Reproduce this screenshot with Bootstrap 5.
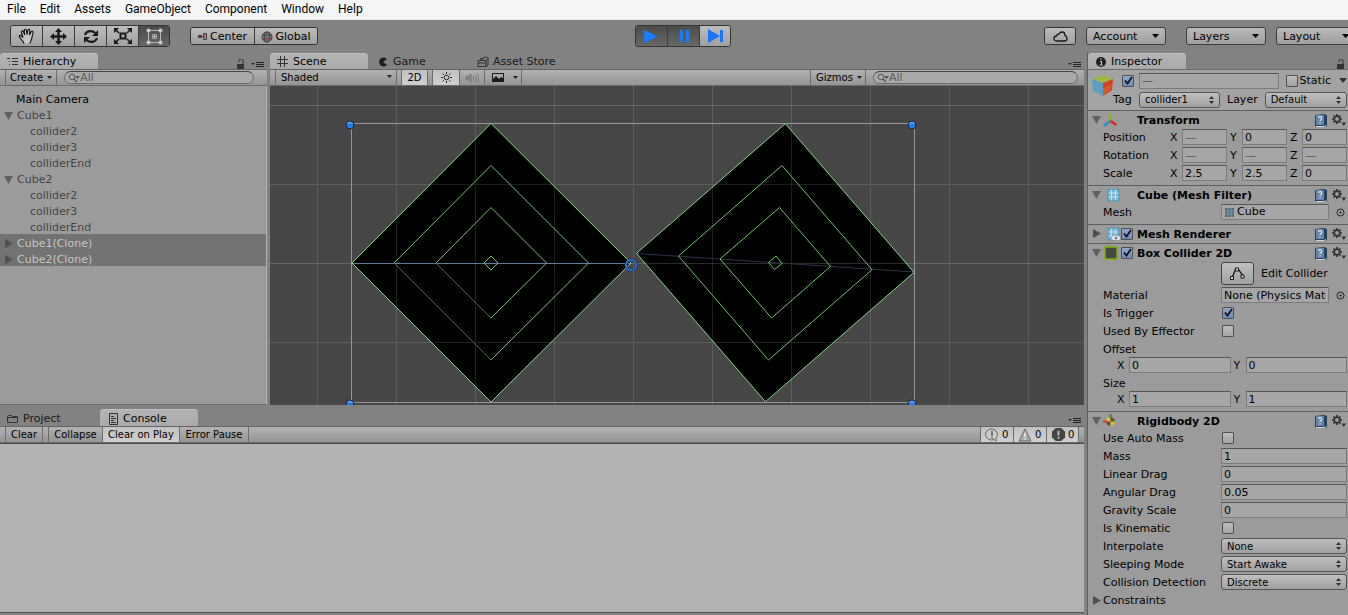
<!DOCTYPE html>
<html lang="en">
<head>
<meta charset="utf-8">
<meta name="viewport" content="width=device-width, initial-scale=1">
<title>Scene editor</title>
<link href="https://cdn.jsdelivr.net/npm/bootstrap@5.3.0/dist/css/bootstrap.min.css" rel="stylesheet">
<style>
  body { font-family: "DejaVu Sans", Verdana, sans-serif; font-size: 11px; line-height: 16px; color: #000; background: #828282; }
  svg { display: block; flex: none; }
  button, select, input { font-family: inherit; color: inherit; border-radius: 0; margin: 0; }
  label { cursor: default; }
  .shrinkable { min-width: 0; min-height: 0; }

  .menubar { height: 20px; background: #f4f6f8; border-bottom: 1px solid #e6e9ea; font: 12px/19px Roboto, "Segoe UI", sans-serif; }
  .menubar a { color: #000; text-decoration: none; padding: 0 7px; }

  .main-tools { height: 32px; margin-right: -14px; padding: 0 6px 0 10px; }
  .side { flex: 1 1 0; }
  .side .tool-group + .tool-group { margin-left: 20px; }
  .side .pick { margin-left: 10px; }
  .side .pick + .pick:not(:last-child) { margin-left: 20px; }
  .tool-group { border: 1px solid #333; border-radius: 3px; overflow: hidden; }
  .tool { display: flex; align-items: center; justify-content: center; gap: 2px; padding: 0; border: 0; border-left: 1px solid #3c3c3c; background: linear-gradient(#bcbcbc, #a0a0a0); }
  .tool:first-child { border-left: 0; }
  .tool.on { background: linear-gradient(#4b4b4b, #676767); }
  .tool-tall { width: 32px; height: 20px; }
  .tool-tall:first-child, .tool-tall:last-child { width: 31px; }
  .tool-short { width: 63px; height: 16px; padding-top: 1px; }
  .tool-cloud { width: 30px; height: 16px; }
  .pick { appearance: none; height: 18px; width: 80px; line-height: 15px; padding: 0 6px; border: 1px solid #3c3c3c; border-radius: 3px;
    background: url("data:image/svg+xml,%3Csvg xmlns='http://www.w3.org/2000/svg' width='7' height='4'%3E%3Cpath d='M0 0h7L3.500 4z'/%3E%3C/svg%3E") no-repeat right 6px center, linear-gradient(#b8b8b8, #a0a0a0); }

  .tabs { height: 17px; padding-top: 1px; }
  .tabs .extras { margin-left: auto; display: flex; align-items: center; padding: 6px 3px 0 0; gap: 6px; }
  .tab { width: 98px; margin-right: 2px; padding: 2px 0 0 7px; gap: 4px; border: 0; background: none; text-align: left; display: flex; align-items: center; white-space: nowrap; color: #1a1a1a; }
  .tab.on { background: linear-gradient(#b4b4b4, #aaa); border-top: 1px solid #c0c0c0; border-radius: 4px 4px 0 0; color: #000; padding-top: 1px; }
  .strip { height: 17px; padding-left: 5px; border-top: 1px solid #636363; border-bottom: 1px solid #6a6a6a; background: linear-gradient(#b2b2b2, #949494); font-size: 10px; }
  .strip button, .strip select { border: 0; border-left: 1px solid #6c6c6c; background: none; font-size: 10px; line-height: 14px; padding: 0 4px; white-space: nowrap; }
  .strip .lit { background: linear-gradient(#c2c2c2, #cfcfcf); }
  .strip .edge { border-right: 1px solid #6c6c6c; }
  .strip .drop { display: flex; align-items: center; gap: 4px; }
  .search { height: 13px; margin: 1px 13px 0 7px; border: 1px solid #6a6a6a; border-top-color: #444; border-radius: 7px; background: #a9a9a9; padding-left: 3px; }
  .search input { border: 0; background: none; outline: 0; padding: 0; font-size: 11px; line-height: 11px; min-width: 0; }
  .search input::placeholder { color: #5a5a5a; opacity: 1; }

  .hier { flex: 0 0 267px; margin-right: 3px; }
  .hier .pane { background: #9b9b9b; border-right: 1px solid #b2b2b2; border-bottom: 1px solid #6a6a6a; padding-top: 4px; }
  .node { display: flex; align-items: center; height: 16px; padding: 3px 0 0 4px; gap: 4px; color: #444; }
  .node.camera { color: #000; padding-left: 16px; }
  .node.child { padding-left: 30px; }
  .node.picked { background: #727272; color: #c8c8c8; }
  .scene .pane { background: #474747; }
  .scene .pane svg { position: absolute; inset: 0; width: 100%; height: 100%; }
  .scene .strip .shading { appearance: none; width: 122px; padding-left: 5px;
    background: url("data:image/svg+xml,%3Csvg xmlns='http://www.w3.org/2000/svg' width='5' height='3'%3E%3Cpath d='M0 0h5L2.500 3z' fill='%23222'/%3E%3C/svg%3E") no-repeat right 4px top 5px; }
  .scene .strip .toggle { width: 27px; margin-left: 4px; }
  .scene .strip .audio { width: 25px; }
  .scene .strip .effects { width: 38px; padding-left: 7px; gap: 9px; }
  .scene .strip .gizmos { width: 56px; padding-left: 5px; }
  .scene .search { width: 205px; margin-right: 6px; }

  .console { flex: 0 0 210px; padding: 4px 0 2px; }
  .console .tabs { padding-top: 0; }
  .console .pane { background: #b2b2b2; border-top: 1px solid #4a4a4a; border-bottom: 1px solid #555; }
  .console .strip { flex: none; }
  .console .strip .clear { width: 38px; margin-right: 5px; }
  .console .strip .collapse-all { width: 54px; }
  .console .strip .on-play { width: 77px; }
  .console .strip .on-error { width: 70px; }
  .console .strip .counter { display: flex; align-items: center; width: 33px; padding: 0 2px 0 4px; gap: 2px; }
  .console .strip .counter:last-child { margin-right: 5px; }

  .inspector { flex: 0 0 261px; margin-left: 3px; border-left: 1px solid #5c5c5c; }
  .inspector .tabs { flex: none; }
  .inspector .pane { background: #9b9b9b; border-top: 1px solid #6a6a6a; }
  .obj { height: 40px; padding-top: 1px; background: #a3a3a3; }
  .obj-icon { margin: 1px 6px 0 2px; }
  .obj-row { display: flex; align-items: center; height: 19px; padding-right: 1px; }
  .obj-row .obj-name { flex: 1 1 0; margin: 0 7px 0 5px; }
  .obj-row .static { margin: 0 8px 0 2px; }
  .obj-row .tag { width: 26px; margin-left: -9px; flex: none; }
  .obj-row .layer { margin: 0 7px; }
  .comp { border-top: 1px solid #5e5e5e; padding-bottom: 3px; }
  .comp.folded { padding-bottom: 1px; }
  .comp-title { display: flex; align-items: center; height: 17px; padding: 1px 2px 0 4px; font-weight: bold; }
  .comp-title .title-text { padding-top: 2px; }
  .comp-title .help { margin: 0 5px 0 auto; }
  .slot { width: 11px; }
  .icon-slot, .tick-slot { width: 17px; }
  .prop { height: 18px; padding: 0 1px 0 15px; display: flex; align-items: center; white-space: nowrap; }
  .prop.head { height: 16px; padding-top: 3px; }
  .prop.tall { height: 25px; }
  .prop.pair { padding-left: 29px; }
  .prop.fold { padding: 1px 0 0 4px; }
  .prop > .cap { width: 118px; flex: none; padding-top: 2px; }
  .prop > .cap-xyz { width: 67px; flex: none; padding-top: 2px; }
  .prop > .tick, .tick-slot .tick { margin-left: 1px; }
  .prop > .picker { margin: 0 2px 0 auto; }
  .axis { display: flex; align-items: center; flex: 1 1 0; }
  .axis label { width: 12px; flex: none; padding-top: 2px; }
  .axis + .axis { padding-left: 3px; }
  .fld { height: 16px; min-width: 0; width: 100%; border: 1px solid #7b7b7b; border-top-color: #555; background: #a6a6a6; padding: 0 2px; font-size: 11px; line-height: 14px; }
  .fld.mixed { color: #555; }
  .fld input { border: 0; background: none; padding: 0 2px; min-width: 0; }
  .objfld { flex: 0 0 108px; }
  .sel { appearance: none; height: 16px; min-width: 0; width: 100%; border: 1px solid #565656; border-radius: 3px; font-size: 10px; line-height: 13px; padding: 0 5px;
    background: url("data:image/svg+xml,%3Csvg xmlns='http://www.w3.org/2000/svg' width='5' height='8'%3E%3Cpath d='M0 3L2.500 0 5 3zM0 5h5L2.500 8z' fill='%23303030'/%3E%3C/svg%3E") no-repeat right 5px center, linear-gradient(#bebebe, #a0a0a0); }
  .sel.tag-list { width: 81px; flex: none; }
  .tick { appearance: none; display: block; width: 12px; height: 12px; flex: none; border: 1px solid #505050; border-radius: 1px; background: linear-gradient(#bdbdbd, #a3a3a3); }
  .tick:checked { background: url("data:image/svg+xml,%3Csvg xmlns='http://www.w3.org/2000/svg' viewBox='0 0 10 10'%3E%3Cpath d='M2 4.500L4.500 7.500 9 1' fill='none' stroke='%23101020' stroke-width='1.800'/%3E%3C/svg%3E"), linear-gradient(#8fa6cc, #6f8cba); }
  .edit { width: 33px; height: 23px; border: 1px solid #444; border-radius: 3px; background: linear-gradient(#c0c0c0, #a0a0a0); padding: 0; }
  .edit + label { margin-left: 7px; }
</style>
</head>
<body class="vh-100 d-flex flex-column overflow-hidden">

<svg width="0" height="0" class="position-absolute" aria-hidden="true">
  <symbol id="lock" viewBox="0 0 8 10"><path d="M0 5h7v5H0z" fill="#333"/><path d="M2 3V2a1.500 1.500 0 0 1 4 0v3" fill="none" stroke="#444" stroke-width="1.300"/></symbol>
  <symbol id="opts" viewBox="0 0 13 7"><path d="M0 2h4L2 4z M5 1h8v1H5z M5 3h8v1H5z M5 5h8v1H5z" fill="#222"/></symbol>
  <symbol id="lens" viewBox="0 0 12 10"><circle cx="4" cy="4" r="2.800" fill="none" stroke="#555"/><path d="M6 6l3 3" stroke="#555" stroke-width="1.500"/><path d="M7 3h5L9.500 6z" fill="#555"/></symbol>
  <symbol id="down" viewBox="0 0 5 3"><path d="M0 0h5L2.500 3z" fill="#222"/></symbol>
  <symbol id="open" viewBox="0 0 9 8"><path d="M0 0h9L4.500 8z" fill="#606060"/></symbol>
  <symbol id="shut" viewBox="0 0 9 10"><path d="M1 0v9l8-4.500z" fill="#505050"/></symbol>
  <symbol id="book" viewBox="0 0 13 13"><path d="M1 1l9-1 3 1v11l-2 1H2l-1-1z" fill="#28405f"/><path d="M2 1h8v10H2z" fill="#6685aa"/><path d="M2 12h8l2-1v1l-2 1H2z" fill="#d0d6dc"/><path d="M4.500 4a1.600 1.600 0 1 1 2.500 1.500Q6 6 6 7M6 8.300v1.200" fill="none" stroke="#e6edf5" stroke-width="1.100"/></symbol>
  <symbol id="gear" viewBox="0 0 14 12"><circle cx="5" cy="5" r="2.800" fill="none" stroke="#303030" stroke-width="1.600"/><path d="M5 0v2M5 8v2M0 5h2M8 5h2M1.500 1.500l1.300 1.300M7.200 7.200l1.300 1.300M8.500 1.500L7.200 2.800M2.800 7.200L1.500 8.500" stroke="#303030" stroke-width="1.700"/><path d="M9.500 8.500H14L11.800 12z" fill="#303030"/></symbol>
  <symbol id="mesh" viewBox="0 0 13 14"><path d="M1 1.500Q6.500.500 12 1.500v11q-5.500 1-11 0z" fill="#79b4d0" stroke="#4a93b5"/><path d="M4.500 1.500v11M8.500 1.500v11M1.500 5h10M1.500 9h10" stroke="#c4e4f2"/></symbol>
  <symbol id="target" viewBox="0 0 9 9"><circle cx="4.500" cy="4.500" r="3.500" fill="none" stroke="#222"/><circle cx="4.500" cy="4.500" r="1" fill="#111"/></symbol>
</svg>

<nav class="menubar d-flex flex-shrink-0" aria-label="Application">
  <a href="#">File</a><a href="#">Edit</a><a href="#">Assets</a><a href="#">GameObject</a><a href="#">Component</a><a href="#">Window</a><a href="#">Help</a>
</nav>

<header class="main-tools d-flex align-items-center flex-shrink-0">
  <div class="side d-flex align-items-center">
    <div class="tool-group d-flex">
      <button class="tool tool-tall" aria-label="Hand"><svg width="18" height="17" viewBox="0 0 18 17"><path d="M6 15.500c-.5-2-2-3-3.500-5C1 8.700 1 7.500 2 7.400c1.300 0 2 1.300 3 2.300L3.500 4.500c-.4-1.600 1.300-2.200 1.900-.7L6.700 7 6.300 2.500c0-1.700 1.900-1.700 2.200 0L9 6.600l.8-4.300c.3-1.600 2.100-1.300 2 .3L11.500 7l1.600-3c.8-1.400 2.400-.6 1.900.9-.8 2.600-.9 4.500-1.500 6.600-.4 1.500-1.500 2.300-1.500 4" fill="#c4c4c4" stroke="#111" stroke-width="1.100"/></svg></button>
      <button class="tool tool-tall" aria-label="Move"><svg width="17" height="17" viewBox="0 0 17 17"><path d="M8.500 0l3.500 4h-2.300v3.300H13V5l4 3.500-4 3.500V9.700H9.700V13H12l-3.500 4L5 13h2.300V9.700H4V12L0 8.500 4 5v2.300h3.300V4H5z" fill="#181818"/></svg></button>
      <button class="tool tool-tall" aria-label="Rotate"><svg width="16" height="15" viewBox="0 0 16 15"><path d="M2 6c1.500-4.500 7-5 10.500-2M14 9c-1.500 4.500-7 5-10.500 2" fill="none" stroke="#1c1c1c" stroke-width="2.200"/><path d="M15 1v6H9zM1 14V8h6z" fill="#1c1c1c"/></svg></button>
      <button class="tool tool-tall" aria-label="Scale"><svg width="18" height="16" viewBox="0 0 18 16"><path d="M6.500 5.500h5v5h-5z" fill="none" stroke="#181818" stroke-width="2"/><path d="M1 1l4 4M17 1l-4 4M1 15l4-4M17 15l-4-4" stroke="#181818" stroke-width="1.600"/><path d="M0 0h5L0 5zM18 0v5l-5-5zM0 16v-5l5 5zM18 16h-5l5-5z" fill="#181818"/></svg></button>
      <button class="tool tool-tall on" aria-label="Rect" aria-pressed="true"><svg width="17" height="17" viewBox="0 0 17 17"><path d="M2.500 2.500h12v12h-12z" fill="none" stroke="#b8b8b8"/><path d="M6.500 6.500h4v4h-4z" fill="none" stroke="#a0a0a0"/><circle cx="8.500" cy="8.500" r="1.200" fill="#ccc"/><g fill="#cacaca"><circle cx="2.500" cy="2.500" r="2"/><circle cx="14.500" cy="2.500" r="2"/><circle cx="2.500" cy="14.500" r="2"/><circle cx="14.500" cy="14.500" r="2"/></g></svg></button>
    </div>
    <div class="tool-group d-flex">
      <button class="tool tool-short"><svg width="10" height="9" viewBox="0 0 10 9"><path d="M0 3h4v3H0z" fill="#444"/><path d="M5.500 1.500h3v6h-3z" fill="#888" stroke="#444"/><path d="M3 4h4v1H3z" fill="#b33"/></svg>Center</button>
      <button class="tool tool-short"><svg width="12" height="12" viewBox="0 0 12 12"><circle cx="6" cy="6" r="5" fill="#777" stroke="#444"/><ellipse cx="6" cy="6" rx="2.500" ry="5" fill="none" stroke="#444"/><path d="M1.500 4h9M1.500 8h9" stroke="#444"/><path d="M4.500 2v6.500H9" fill="none" stroke="#b44"/></svg>Global</button>
    </div>
  </div>
  <div class="tool-group d-flex">
    <button class="tool tool-tall on" aria-label="Play"><svg width="17" height="15" viewBox="0 0 17 15"><path d="M1 1l14 6.500L1 14z" fill="#1b7dff" stroke="#2a6fc0" stroke-opacity=".5"/></svg></button>
    <button class="tool tool-tall on" aria-label="Pause"><svg width="12" height="14" viewBox="0 0 12 14"><path d="M2 1h3v12H2zM8 1h3v12H8z" fill="#1b7dff" stroke="#2a6fc0" stroke-opacity=".5"/></svg></button>
    <button class="tool tool-tall" aria-label="Step"><svg width="17" height="14" viewBox="0 0 17 14"><path d="M1 0l12 7L1 14zM13 1h3v12h-3z" fill="#1874fa"/></svg></button>
  </div>
  <div class="side d-flex align-items-center justify-content-end">
    <div class="tool-group"><button class="tool tool-cloud" aria-label="Cloud"><svg width="15" height="11" viewBox="0 0 15 11"><path d="M4 10Q1 10 1 7.500 1 5 3.500 5 4 3 6 3 7 1 9 1q3 0 3 3.500 2 .5 2 3T11.500 10z" fill="none" stroke="#181818" stroke-width="1.300"/></svg></button></div>
    <select class="pick" aria-label="Account"><option>Account</option></select>
    <select class="pick" aria-label="Layers"><option>Layers</option></select>
    <select class="pick" aria-label="Layout"><option>Layout</option></select>
  </div>
</header>

<main class="d-flex flex-grow-1 shrinkable">
  <div class="d-flex flex-column flex-grow-1 shrinkable">
    <div class="d-flex flex-grow-1 shrinkable">

      <section class="hier d-flex flex-column">
        <div class="tabs d-flex">
          <button class="tab on"><svg width="12" height="10" viewBox="0 0 12 10"><path d="M0 1h3v1H0zM1.500 1h1v1h-1zM2 4h1v1H2zM2 7h1v1H2zM5 1h6v1H5zM5 4h6v1H5zM5 7h6v1H5z" fill="#333"/></svg>Hierarchy</button>
          <div class="extras"><svg width="8" height="10"><use href="#lock"/></svg><svg width="13" height="7"><use href="#opts"/></svg></div>
        </div>
        <div class="strip d-flex">
          <button class="edge drop">Create<svg width="5" height="3"><use href="#down"/></svg></button>
          <div class="search d-flex align-items-center flex-grow-1"><svg width="12" height="10"><use href="#lens"/></svg><input class="flex-grow-1" placeholder="All" aria-label="Search hierarchy"></div>
        </div>
        <ul class="pane list-unstyled mb-0 flex-grow-1">
          <li class="node camera">Main Camera</li>
          <li class="node"><svg width="9" height="8"><use href="#open"/></svg>Cube1</li>
          <li class="node child">collider2</li>
          <li class="node child">collider3</li>
          <li class="node child">colliderEnd</li>
          <li class="node"><svg width="9" height="8"><use href="#open"/></svg>Cube2</li>
          <li class="node child">collider2</li>
          <li class="node child">collider3</li>
          <li class="node child">colliderEnd</li>
          <li class="node picked"><svg width="9" height="10"><use href="#shut"/></svg>Cube1(Clone)</li>
          <li class="node picked"><svg width="9" height="10"><use href="#shut"/></svg>Cube2(Clone)</li>
        </ul>
      </section>

      <section class="scene d-flex flex-column flex-grow-1 shrinkable">
        <div class="tabs d-flex">
          <button class="tab on"><svg width="12" height="12" viewBox="0 0 12 12"><path d="M3.500 0v11M7.500 0v11M0 3.500h11M0 7.500h11" stroke="#333"/></svg>Scene</button>
          <button class="tab"><svg width="12" height="12" viewBox="0 0 12 12"><path d="M10 3A4.500 4.500 0 1 0 10 9L6 6z" fill="#1c1c1c"/></svg>Game</button>
          <button class="tab"><svg width="12" height="12" viewBox="0 0 12 12"><path d="M1 4.500h8v6H1zM9 4.500l2-1.500v6l-2 1.500M1 7h8M3.500 4V2.500h3M5.500 4q0-3 3-3t3 2" fill="none" stroke="#333"/></svg>Asset Store</button>
          <div class="extras"><svg width="13" height="7"><use href="#opts"/></svg></div>
        </div>
        <div class="strip d-flex">
          <select class="edge shading" aria-label="Draw mode"><option>Shaded</option></select>
          <button class="lit edge toggle">2D</button>
          <button class="lit toggle d-flex align-items-center justify-content-center" aria-label="Lighting"><svg width="13" height="13" viewBox="0 0 13 13"><circle cx="6.500" cy="6.500" r="2.300" fill="none" stroke="#222"/><path d="M6.500 1v2M6.500 10v2M1 6.500h2M10 6.500h2M2.500 2.500l1.300 1.300M9.200 9.200l1.300 1.300M10.500 2.500L9.200 3.800M3.800 9.200l-1.300 1.300" stroke="#222"/></svg></button>
          <button class="audio d-flex align-items-center justify-content-center" aria-label="Audio"><svg width="14" height="12" viewBox="0 0 14 12"><path d="M1 4.500h2L6 2v8L3 7.500H1z" fill="#888" stroke="#777"/><path d="M8 4q1.500 2 0 4M10 2.500q3 3.500 0 7M12 1q4 5 0 10" fill="none" stroke="#777"/></svg></button>
          <button class="edge drop effects" aria-label="Effects"><svg width="12" height="10" viewBox="0 0 12 10"><path d="M0 0h12v9H0z" fill="#1c1c1c"/><path d="M1 1h10v4L9 4 7 6 4 3 1 6z" fill="#aaa"/></svg><svg width="5" height="3"><use href="#down"/></svg></button>
          <button class="edge drop gizmos ms-auto">Gizmos<svg width="5" height="3"><use href="#down"/></svg></button>
          <div class="search d-flex align-items-center"><svg width="12" height="10"><use href="#lens"/></svg><input class="flex-grow-1" placeholder="All" aria-label="Search scene"></div>
        </div>
        <div class="pane position-relative flex-grow-1 overflow-hidden">
          <svg viewBox="270 86 814 319" preserveAspectRatio="xMidYMin slice" role="img" aria-label="Two rotated square sprites with nested colliders">
            <defs><linearGradient id="knob" x2="0" y2="1"><stop stop-color="#8dbcf6"/><stop offset=".5" stop-color="#1d74ea"/><stop offset="1" stop-color="#2b7df0"/></linearGradient></defs>
            <path d="M491 123.500L631 263 491 402 352 263zM785.300 123.700L914 272.300 765.500 401.700 636.500 253.300z"/>
            <g stroke="#fff" stroke-opacity=".12" shape-rendering="crispEdges">
              <path d="M317.500 86v319M396.500 86v319M475.500 86v319M554.500 86v319M633.500 86v319M712.500 86v319M791.500 86v319M870.500 86v319M949.500 86v319M1028.500 86v319M270 184.500h814M270 342.500h814"/>
              <path d="M270 105.500h814M270 263.500h814" stroke-opacity=".17"/>
            </g>
            <path d="M352 263h279" stroke="#667a9e" shape-rendering="crispEdges"/><path d="M637 253.500L914 272" stroke="#293547"/>
            <g fill="none" stroke="#86d683">
              <path d="M491 123.500L631 263 491 402 352 263zM785.300 123.700L914 272.300 765.500 401.700 636.500 253.300z"/>
              <g stroke="#72bf6c"><path d="M394 263L491 165.500 588.500 263 491 360M436 263L491 207.500 546.500 263 491 318M484 263L491 256 498 263 491 270z"/>
              <path d="M782 165.500L872 269.700 768.500 360 678.500 256zM779.500 207.500L830.500 266.500 771.500 318 720 259zM776 256L782 263.500 774.500 269.500 768.500 262.500z"/></g>
              <path d="M394 263L491 360M436 263L491 318" stroke="#3d6b3b"/>
            </g>
            <path d="M351.500 123.500h562.500v279h-562.500z" fill="none" stroke="#989898" shape-rendering="crispEdges"/>
            <g fill="url(#knob)" stroke="#152238"><circle cx="350" cy="125" r="4"/><circle cx="912" cy="125" r="4"/><circle cx="350" cy="404" r="4"/><circle cx="912" cy="404" r="4"/></g>
            <circle cx="631" cy="265" r="5" fill="none" stroke="#142440" stroke-width="3"/><circle cx="631" cy="265" r="5" fill="none" stroke="#2a72d4" stroke-width="2"/>
          </svg>
        </div>
      </section>
    </div>

    <section class="console d-flex flex-column">
      <div class="tabs d-flex">
        <button class="tab"><svg width="12" height="10" viewBox="0 0 12 10"><path d="M.500 8.500v-6l1-1h3l1 1h5v6zM.500 3.500h9l1 1" fill="none" stroke="#333"/></svg>Project</button>
        <button class="tab on"><svg width="12" height="12" viewBox="0 0 12 12"><path d="M2.500.500h8v11h-8zM4 3.500h3M4 5.500h5M4 7.500h3M4 9.500h5" fill="none" stroke="#333"/></svg>Console</button>
        <div class="extras"><svg width="13" height="7"><use href="#opts"/></svg></div>
      </div>
      <div class="strip d-flex">
        <button class="edge clear">Clear</button>
        <button class="collapse-all">Collapse</button>
        <button class="lit on-play">Clear on Play</button>
        <button class="edge on-error">Error Pause</button>
        <button class="lit counter ms-auto"><svg width="15" height="14" viewBox="0 0 15 14"><path d="M7 1a6 5.500 0 1 0 2 10.500L11 13v-3A6 5.500 0 0 0 7 1z" fill="#ccc" stroke="#666"/><path d="M7 3v5M7 9v1.500" stroke="#555" stroke-width="1.500"/></svg>0</button>
        <button class="lit counter"><svg width="15" height="14" viewBox="0 0 15 14"><path d="M7 1L13 13H1z" fill="#aaa" stroke="#666"/><path d="M7 5v4M7 10v1.500" stroke="#eee" stroke-width="1.500"/></svg>0</button>
        <button class="lit edge counter"><svg width="15" height="15" viewBox="0 0 16 16"><path d="M5 1h6l4 4v6l-4 4H5l-4-4V5z" fill="#444"/><path d="M8 4v5M8 10.500v2" stroke="#bbb" stroke-width="2"/></svg>0</button>
      </div>
      <div class="pane flex-grow-1" role="log"></div>
    </section>
  </div>

  <aside class="inspector d-flex flex-column overflow-hidden">
    <div class="tabs d-flex">
      <button class="tab on"><svg width="12" height="12" viewBox="0 0 12 12"><circle cx="6" cy="6" r="5" fill="#222"/><path d="M6 2.500v1.500M5 5.500h1.500V9M4.500 9h3" fill="none" stroke="#ccc"/></svg>Inspector</button>
      <div class="extras"><svg width="8" height="10"><use href="#lock"/></svg></div>
    </div>
    <div class="pane flex-grow-1">
      <div class="obj d-flex">
        <svg class="obj-icon" width="26" height="26" viewBox="0 0 26 26"><path d="M2 7l11-4 10 4-10 4z" fill="#9bb840"/><path d="M2 7l11 4v13L3 19z" fill="#5a9fc2"/><path d="M23 7l-10 4v13l9-6z" fill="#cf4420"/><path d="M13 16l8-3v3l-8 8z" fill="#e07030" opacity=".5"/></svg>
        <div class="flex-grow-1 shrinkable">
          <div class="obj-row"><input type="checkbox" class="tick" checked aria-label="Active"><input class="fld mixed obj-name" value="—" aria-label="Name"><input type="checkbox" class="tick" id="static"><label class="static" for="static">Static</label><svg width="8" height="5" viewBox="0 0 8 5"><path d="M0 0h8L4 5z" fill="#333"/></svg></div>
          <div class="obj-row"><label class="tag" for="tag">Tag</label><select class="sel tag-list" id="tag"><option>collider1</option></select><label class="layer" for="layer">Layer</label><select class="sel" id="layer"><option>Default</option></select></div>
        </div>
      </div>

      <section class="comp">
        <div class="comp-title"><span class="slot"><svg width="9" height="8"><use href="#open"/></svg></span><span class="icon-slot"><svg width="15" height="15" viewBox="0 0 15 15"><path d="M7.500 8V1" stroke="#8ab800" stroke-width="2.500"/><path d="M7 8l-6 5" stroke="#2e8fc6" stroke-width="2.500"/><path d="M7.500 8l6 4" stroke="#d22" stroke-width="2.500"/></svg></span><span class="tick-slot"></span><span class="title-text">Transform</span><svg class="help" width="13" height="13"><use href="#book"/></svg><svg width="14" height="12"><use href="#gear"/></svg></div>
        <div class="prop"><span class="cap-xyz">Position</span><span class="axis"><label for="px">X</label><input class="fld mixed" id="px" value="—"></span><span class="axis"><label for="py">Y</label><input class="fld" id="py" value="0"></span><span class="axis"><label for="pz">Z</label><input class="fld" id="pz" value="0"></span></div>
        <div class="prop"><span class="cap-xyz">Rotation</span><span class="axis"><label for="rx">X</label><input class="fld mixed" id="rx" value="—"></span><span class="axis"><label for="ry">Y</label><input class="fld mixed" id="ry" value="—"></span><span class="axis"><label for="rz">Z</label><input class="fld mixed" id="rz" value="—"></span></div>
        <div class="prop"><span class="cap-xyz">Scale</span><span class="axis"><label for="sx">X</label><input class="fld" id="sx" value="2.5"></span><span class="axis"><label for="sy">Y</label><input class="fld" id="sy" value="2.5"></span><span class="axis"><label for="sz">Z</label><input class="fld" id="sz" value="0"></span></div>
      </section>

      <section class="comp">
        <div class="comp-title"><span class="slot"><svg width="9" height="8"><use href="#open"/></svg></span><span class="icon-slot"><svg class="ms-1" width="13" height="14"><use href="#mesh"/></svg></span><span class="tick-slot"></span><span class="title-text">Cube (Mesh Filter)</span><svg class="help" width="13" height="13"><use href="#book"/></svg><svg width="14" height="12"><use href="#gear"/></svg></div>
        <div class="prop"><label class="cap" for="meshf">Mesh</label><span class="fld objfld d-flex align-items-center"><svg width="11" height="11" viewBox="0 0 11 11"><path d="M1 1h9v9H1z" fill="#50697a"/><path d="M4 1v9M7 1v9M1 4h9M1 7h9" stroke="#7d95a4"/></svg><input id="meshf" value="Cube"></span><svg class="picker" width="9" height="9"><use href="#target"/></svg></div>
      </section>

      <section class="comp folded">
        <div class="comp-title"><span class="slot"><svg width="9" height="10"><use href="#shut"/></svg></span><span class="icon-slot"><svg class="ms-1" width="15" height="15" viewBox="0 0 15 15"><use href="#mesh" width="13" height="14"/><ellipse cx="9" cy="11" rx="4.500" ry="2.700" fill="#eee" stroke="#777" stroke-width=".6"/><circle cx="9" cy="11" r="1.600" fill="#5a8aa8"/></svg></span><span class="tick-slot"><input type="checkbox" class="tick" checked aria-label="Enable Mesh Renderer"></span><span class="title-text">Mesh Renderer</span><svg class="help" width="13" height="13"><use href="#book"/></svg><svg width="14" height="12"><use href="#gear"/></svg></div>
      </section>

      <section class="comp">
        <div class="comp-title"><span class="slot"><svg width="9" height="8"><use href="#open"/></svg></span><span class="icon-slot"><svg width="15" height="14" viewBox="0 0 15 14"><path d="M2 1h12v12H2z" fill="#474747" stroke="#7fb000" stroke-width="1.500"/></svg></span><span class="tick-slot"><input type="checkbox" class="tick" checked aria-label="Enable Box Collider 2D"></span><span class="title-text">Box Collider 2D</span><svg class="help" width="13" height="13"><use href="#book"/></svg><svg width="14" height="12"><use href="#gear"/></svg></div>
        <div class="prop tall"><span class="cap"></span><button class="edit d-flex align-items-center justify-content-center" id="editc"><svg width="15" height="13" viewBox="0 0 15 13"><path d="M2 11L5.500 2.500h3L13 9" fill="none" stroke="#111" stroke-width="1.300"/><path d="M.500 9.500h3v3h-3zM5.500 1h3v3h-3zM11 8h3v3h-3z" fill="#ddd" stroke="#111"/></svg></button><label for="editc">Edit Collider</label></div>
        <div class="prop"><label class="cap" for="mat">Material</label><input class="fld objfld" id="mat" value="None (Physics Material 2D)"><svg class="picker" width="9" height="9"><use href="#target"/></svg></div>
        <div class="prop"><label class="cap" for="trig">Is Trigger</label><input type="checkbox" class="tick" id="trig" checked></div>
        <div class="prop"><label class="cap" for="eff">Used By Effector</label><input type="checkbox" class="tick" id="eff"></div>
        <div class="prop head">Offset</div>
        <div class="prop pair"><span class="axis"><label for="ox">X</label><input class="fld" id="ox" value="0"></span><span class="axis"><label for="oy">Y</label><input class="fld" id="oy" value="0"></span></div>
        <div class="prop head">Size</div>
        <div class="prop pair"><span class="axis"><label for="zx">X</label><input class="fld" id="zx" value="1"></span><span class="axis"><label for="zy">Y</label><input class="fld" id="zy" value="1"></span></div>
      </section>

      <section class="comp">
        <div class="comp-title"><span class="slot"><svg width="9" height="8"><use href="#open"/></svg></span><span class="icon-slot"><svg width="14" height="14" viewBox="0 0 14 14"><circle cx="7.500" cy="7.500" r="4.500" fill="#e0c030"/><path d="M7.500 3a4.500 4.500 0 0 1 4.500 4.500H7.500zM7.500 12A4.500 4.500 0 0 1 3 7.500h4.500z" fill="#555"/><path d="M7.500 0v4" stroke="#3a8a20" stroke-width="2"/><path d="M0 7.500h4" stroke="#d33" stroke-width="2"/></svg></span><span class="tick-slot"></span><span class="title-text">Rigidbody 2D</span><svg class="help" width="13" height="13"><use href="#book"/></svg><svg width="14" height="12"><use href="#gear"/></svg></div>
        <div class="prop"><label class="cap" for="auto">Use Auto Mass</label><input type="checkbox" class="tick" id="auto"></div>
        <div class="prop"><label class="cap" for="mass">Mass</label><input class="fld" id="mass" value="1"></div>
        <div class="prop"><label class="cap" for="ldrag">Linear Drag</label><input class="fld" id="ldrag" value="0"></div>
        <div class="prop"><label class="cap" for="adrag">Angular Drag</label><input class="fld" id="adrag" value="0.05"></div>
        <div class="prop"><label class="cap" for="grav">Gravity Scale</label><input class="fld" id="grav" value="0"></div>
        <div class="prop"><label class="cap" for="kin">Is Kinematic</label><input type="checkbox" class="tick" id="kin"></div>
        <div class="prop"><label class="cap" for="interp">Interpolate</label><select class="sel" id="interp"><option>None</option></select></div>
        <div class="prop"><label class="cap" for="sleep">Sleeping Mode</label><select class="sel" id="sleep"><option>Start Awake</option></select></div>
        <div class="prop"><label class="cap" for="coll">Collision Detection</label><select class="sel" id="coll"><option>Discrete</option></select></div>
        <div class="prop fold"><span class="slot"><svg width="9" height="10"><use href="#shut"/></svg></span>Constraints</div>
      </section>
    </div>
  </aside>
</main>

<script src="https://cdn.jsdelivr.net/npm/bootstrap@5.3.0/dist/js/bootstrap.bundle.min.js"></script>
</body>
</html>
